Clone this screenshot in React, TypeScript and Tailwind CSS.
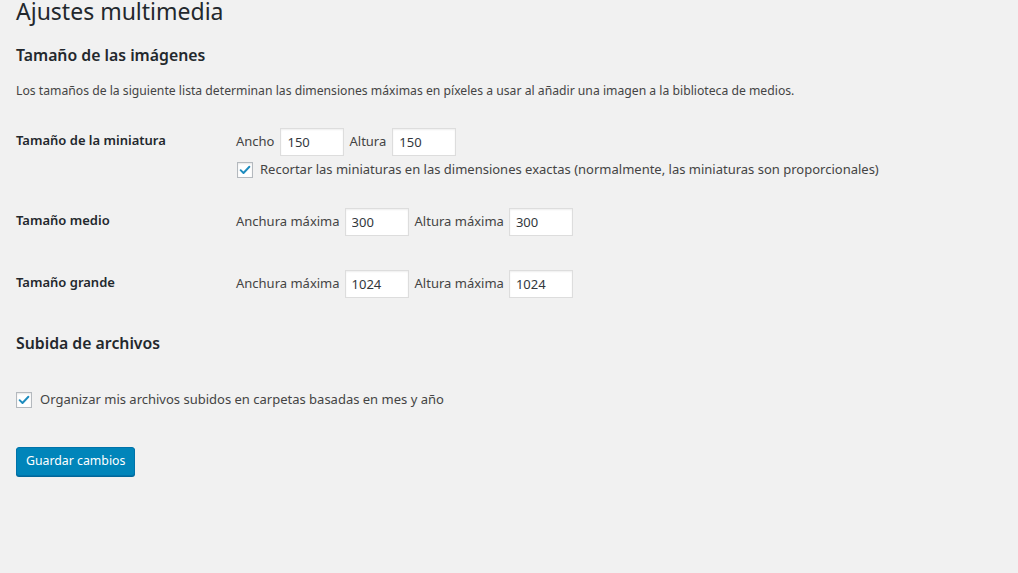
import { useState } from 'react';

const font = "font-['Noto_Sans','Open_Sans',sans-serif]";

function Field({ label, value, wide }: { label: string; value: string; wide?: boolean }) {
  return (
    <label className="flex items-center">
      <span className={wide ? 'mr-[6px]' : 'mr-[5px]'}>{label}</span>
      <input
        defaultValue={value}
        className="w-[64px] h-[28px] px-[6px] bg-white border border-[#ddd] shadow-[inset_0_1px_2px_rgba(0,0,0,0.07)] text-[#32373c] text-[13px] outline-none"
      />
    </label>
  );
}

function Check({ checked, onToggle }: { checked: boolean; onToggle: () => void }) {
  return (
    <button
      type="button"
      onClick={onToggle}
      className="w-[16px] h-[16px] shrink-0 bg-white border border-[#b4b9be] shadow-[inset_0_1px_2px_rgba(0,0,0,0.1)] flex items-center justify-center"
    >
      {checked && (
        <svg viewBox="0 0 16 16" className="w-[14px] h-[14px]">
          <path d="M3 8.2 L6.3 11.4 L13 4.3" fill="none" stroke="#1e8cbe" strokeWidth="2.2" strokeLinecap="round" strokeLinejoin="round" />
        </svg>
      )}
    </button>
  );
}

function Row({ label, children, h }: { label: string; children: React.ReactNode; h: string }) {
  return (
    <div className={`flex ${h}`}>
      <div className="w-[220px] pt-[20px] font-semibold text-[#23282d] leading-[17px]">{label}</div>
      <div className="pt-[16px] flex flex-col">{children}</div>
    </div>
  );
}

export default function App() {
  const [crop, setCrop] = useState(true);
  const [organize, setOrganize] = useState(true);

  return (
    <div className={`${font} min-h-[573px] bg-[#f1f1f1] text-[#444] text-[13px] pl-[16px] overflow-hidden`}>
      <h1 className="-mt-[3px] text-[23px] leading-[29px] text-[#23282d]">Ajustes multimedia</h1>

      <h2 className="mt-[18px] text-[15.8px] leading-[22px] font-semibold text-[#23282d]">Tamaño de las imágenes</h2>
      <p className="mt-[16px] leading-[18px] text-[12.2px]">
        Los tamaños de la siguiente lista determinan las dimensiones máximas en píxeles a usar al añadir una imagen a la biblioteca de medios.
      </p>

      <div className="mt-[12px]">
        <Row label="Tamaño de la miniatura" h="h-[80px]">
          <div className="flex gap-[5px]">
            <Field label="Ancho" value="150" wide />
            <Field label="Altura" value="150" wide />
          </div>
          <label className="flex items-center mt-[4px] ml-[1px]">
            <Check checked={crop} onToggle={() => setCrop(!crop)} />
            <span className="ml-[7px] text-[13px]">Recortar las miniaturas en las dimensiones exactas (normalmente, las miniaturas son proporcionales)</span>
          </label>
        </Row>
        <Row label="Tamaño medio" h="h-[62px]">
          <div className="flex gap-[6px]">
            <Field label="Anchura máxima" value="300" />
            <Field label="Altura máxima" value="300" />
          </div>
        </Row>
        <Row label="Tamaño grande" h="h-[62px]">
          <div className="flex gap-[6px]">
            <Field label="Anchura máxima" value="1024" />
            <Field label="Altura máxima" value="1024" />
          </div>
        </Row>
      </div>

      <h2 className="mt-[16px] text-[15.8px] leading-[22px] font-semibold text-[#23282d]">Subida de archivos</h2>

      <label className="flex items-center mt-[36px]">
        <Check checked={organize} onToggle={() => setOrganize(!organize)} />
        <span className="ml-[8px] text-[13px]">Organizar mis archivos subidos en carpetas basadas en mes y año</span>
      </label>

      <button
        type="button"
        className="mt-[37px] h-[29px] px-[9px] bg-[#0085ba] border border-[#0073aa] rounded-[3px] text-white text-[12.3px] shadow-[0_1px_0_#006799]"
      >
        Guardar cambios
      </button>
    </div>
  );
}
